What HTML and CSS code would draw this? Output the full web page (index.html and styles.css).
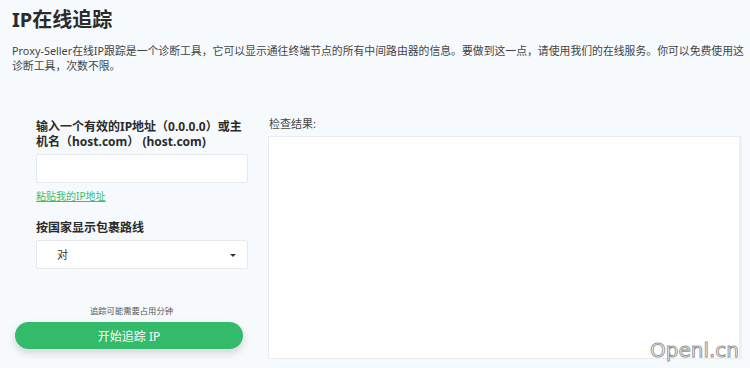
FILE: index.html
```html
<!DOCTYPE html>
<html lang="zh-CN">
<head>
    <meta charset="UTF-8">
    <meta name="viewport" content="width=device-width, initial-scale=1.0">
    <title>IP在线追踪</title>
    <link rel="stylesheet" href="styles.css">
</head>
<body>
    <div class="page">
        <h1 class="title">IP在线追踪</h1>
        <p class="intro">Proxy-Seller在线IP跟踪是一个诊断工具，它可以显示通往终端节点的所有中间路由器的信息。要做到这一点，请使用我们的在线服务。你可以免费使用这<br>诊断工具，次数不限。</p>

        <div class="tracer">
            <form class="trace-form" id="traceForm">
                <div class="form-group">
                    <label for="host">输入一个有效的IP地址（0.0.0.0）或主机名（host.com） (host.com)</label>
                    <input type="text" id="host" name="host">
                    <a href="#" class="paste-link">粘贴我的IP地址</a>
                </div>

                <div class="form-group">
                    <label for="country">按国家显示包裹路线</label>
                    <div class="select-wrap">
                        <select id="country" name="country">
                            <option value="yes">对</option>
                            <option value="no">不</option>
                        </select>
                    </div>
                </div>

                <p class="hint">追踪可能需要占用分钟</p>
                <button type="submit" class="submit-btn">开始追踪 IP</button>
            </form>

            <div class="result">
                <div class="result-label">检查结果:</div>
                <div class="result-box" id="result"></div>
            </div>
        </div>
    </div>

    <div class="watermark">Openl.cn</div>
</body>
</html>
```

FILE: styles.css
```css
body {
    margin: 0;
    background-color: #f7fafd;
    font-family: "Noto Sans", "Noto Sans CJK SC", sans-serif;
    color: #333;
    overflow: hidden;
}

.page {
    padding: 6px 10px 0 12px;
}

.title {
    margin: 0;
    font-size: 20px;
    line-height: 28px;
    font-weight: 700;
    color: #2b2b2b;
}

.intro {
    margin: 9px 0 0 0;
    font-size: 10.85px;
    line-height: 15px;
    color: #444;
    white-space: nowrap;
}

.tracer {
    display: flex;
    gap: 20px;
    margin-top: 46px;
}

.trace-form {
    width: 233px;
    margin-left: 3px;
}

.form-group {
    padding-left: 21px;
}

.form-group label {
    display: block;
    font-size: 12px;
    line-height: 15px;
    font-weight: 700;
    color: #2b2b2b;
    margin-bottom: 5px;
}

.form-group + .form-group {
    margin-top: 15px;
}

.form-group input,
.select-wrap {
    display: block;
    box-sizing: border-box;
    width: 100%;
    height: 29px;
    border: 1px solid #e6e9ec;
    border-radius: 2px;
    background-color: #fff;
}

.paste-link {
    display: inline-block;
    margin-top: 4px;
    font-size: 10px;
    color: #3dbb74;
}

.select-wrap {
    position: relative;
}

.select-wrap select {
    width: 100%;
    height: 100%;
    border: none;
    background: transparent;
    appearance: none;
    padding-left: 20px;
    font-family: inherit;
    font-size: 11px;
    color: #333;
}

.select-wrap::after {
    content: "";
    position: absolute;
    right: 11px;
    top: 13px;
    border-left: 3px solid transparent;
    border-right: 3px solid transparent;
    border-top: 3px solid #333;
}

.hint {
    margin: 35px 0 0 0;
    text-align: center;
    font-size: 8.3px;
    color: #555;
}

.submit-btn {
    display: block;
    width: 228px;
    height: 27px;
    margin-top: 6px;
    border: none;
    border-radius: 14px;
    background-color: #33ba6b;
    color: #fff;
    font-family: inherit;
    font-size: 12px;
    box-shadow: 0 4px 8px rgba(0, 0, 0, 0.15);
    cursor: pointer;
}

.result {
    flex: 1;
}

.result-label {
    font-size: 11px;
    line-height: 14px;
    color: #444;
    margin: -2px 0 5px 1px;
}

.result-box {
    height: 221px;
    background-color: #fff;
    border: 1px solid #e9ecef;
    box-shadow: 2px 0 0 #eef2f5;
}

.watermark {
    position: absolute;
    left: 650px;
    top: 338px;
    font-family: "DejaVu Sans", sans-serif;
    font-size: 20px;
    color: #fff;
    -webkit-text-stroke: 1px #999;
}
```
